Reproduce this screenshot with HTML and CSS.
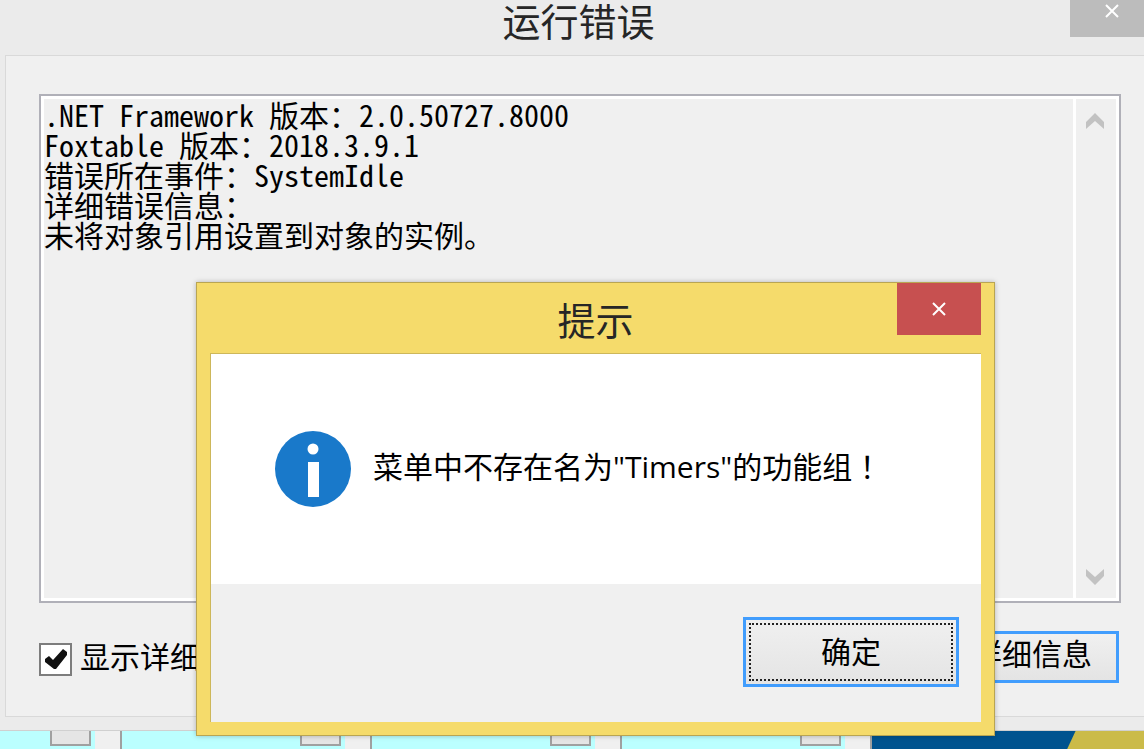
FILE: index.html
```html
<!DOCTYPE html>
<html lang="zh-CN">
<head>
  <meta charset="UTF-8" />
  <meta name="viewport" content="width=device-width, initial-scale=1.0"/>
  <title>运行错误</title>
  <link rel="stylesheet" href="styles.css">
</head>
<body>
  <main class="window">
    <header class="titlebar">
      <h1>运行错误</h1>
      <button class="close" aria-label="关闭">
        <svg width="16" height="14" viewBox="0 0 16 14"><path d="M2 1 L14 13 M14 1 L2 13"/></svg>
      </button>
    </header>
    <div class="panel">
      <div class="log">
        <textarea aria-label="错误信息" readonly>.NET Framework 版本：2.0.50727.8000
Foxtable 版本：2018.3.9.1
错误所在事件：SystemIdle
详细错误信息：
未将对象引用设置到对象的实例。</textarea>
        <div class="scrollbar">
          <svg width="20" height="18" viewBox="0 0 20 18"><path d="M1 10 L10 1 L19 10 V17 L10 9 L1 17 Z"/></svg>
          <svg width="20" height="18" viewBox="0 0 20 18"><path d="M1 1 L10 9 L19 1 V8 L10 17 L1 8 Z"/></svg>
        </div>
      </div>
      <div class="actions">
        <div class="check">
          <input type="checkbox" id="detail" checked>
          <svg width="33" height="33" viewBox="0 0 33 33"><path d="M6 16 L10 13 L14 17 L24 6 L28 9 V12 L17 26 H15 L6 19 Z"/></svg>
          <label for="detail">显示详细</label>
        </div>
        <button class="btn">详细信息</button>
      </div>
    </div>
  </main>

  <!-- form left open behind the error window -->
  <div class="behind">
    <div class="cells">
      <div class="cell"><i></i></div>
      <div class="cell"><i></i></div>
      <div class="cell"><i></i></div>
      <div class="cell"><i></i></div>
    </div>
    <div class="banner"></div>
  </div>

  <section class="dialog" role="dialog" aria-labelledby="dialog-title">
    <header class="dialog-title">
      <h2 id="dialog-title">提示</h2>
      <button class="close" aria-label="关闭">
        <svg width="16" height="14" viewBox="0 0 16 14"><path d="M2 1 L14 13 M14 1 L2 13"/></svg>
      </button>
    </header>
    <div class="client">
      <div class="message">
        <svg width="76" height="76" viewBox="0 0 76 76">
          <circle cx="38" cy="38" r="38" fill="#1979ca"/>
          <circle cx="38" cy="18" r="5.5" fill="#fff"/>
          <rect x="33" y="31" width="11" height="35" fill="#fff"/>
        </svg>
        <p>菜单中不存在名为"Timers"的功能组<span class="mark" lang="zh-TW">！</span></p>
      </div>
      <div class="dialog-actions">
        <button class="btn ok">确定</button>
      </div>
    </div>
  </section>
</body>
</html>
```

FILE: styles.css
```css
* {
  box-sizing: border-box;
}

body {
  margin: 0;
  height: 100vh;
  display: flex;
  flex-direction: column;
  overflow: hidden;
  position: relative;
  background-color: #ebebeb;
  color: #000;
  font-family: "Open Sans", "Noto Sans CJK SC", sans-serif;
  font-size: 30px;
}

h1,
h2 {
  margin: 0;
  font-size: 38px;
  font-weight: 400;
  line-height: 42px;
  color: #262626;
}

button {
  font-family: inherit;
  color: inherit;
}

svg {
  display: block;
  flex: none;
}

.window {
  flex: 1;
  display: flex;
  flex-direction: column;
  padding: 0 0 13px 5px;
  border-bottom: 1px solid #d0d0d0;
}

.titlebar {
  height: 55px;
  padding-left: 8px;
  position: relative;
  text-align: center;
}

.close {
  position: absolute;
  top: 0;
  right: 0;
  width: 74px;
  height: 37px;
  padding: 0;
  border: none;
  background-color: #bcbcbc;
}

.close svg {
  margin: 0 auto;
  fill: none;
  stroke: #fff;
  stroke-width: 2;
}

.titlebar .close {
  display: flex;
  padding: 4px 0 0 10px;
}

.panel {
  flex: 1;
  display: flex;
  flex-direction: column;
  padding: 38px 23px 33px 33px;
  background-color: #f0f0f0;
  border: 1px solid #d9d9d9;
  border-right: none;
}

.log {
  flex: 1;
  display: flex;
  padding: 3px;
  background-color: #fff;
  border: 2px solid #b0b0b8;
}

.log textarea {
  flex: 1;
  margin: 0;
  padding: 0;
  border: none;
  outline: none;
  resize: none;
  overflow: hidden;
  background-color: #f0f0f0;
  color: #000;
  font-family: "Noto Sans Mono CJK SC", "Noto Sans CJK SC", monospace;
  font-size: 30px;
  line-height: 30px;
}

.scrollbar {
  width: 40px;
  margin-left: 3px;
  padding: 13px 2px 12px 0;
  display: flex;
  flex-direction: column;
  justify-content: space-between;
  align-items: center;
  background-color: #f0f0f0;
  fill: #c2c2c2;
}

.actions {
  display: flex;
  justify-content: space-between;
  padding: 28px 2px 0 0;
}

.check {
  display: flex;
  align-items: center;
  gap: 8px;
  line-height: 52px;
  position: relative;
}

.check input {
  appearance: none;
  width: 33px;
  height: 33px;
  margin: 5px 0 0;
  border: 2px solid #7d7d7d;
  background-color: #fff;
}

.check svg {
  position: absolute;
  left: 0;
  top: 12px;
  fill: #111;
  visibility: hidden;
  pointer-events: none;
}

.check input:checked + svg {
  visibility: visible;
}

.btn {
  width: 174px;
  height: 52px;
  padding: 0 0 6px;
  border: 3px solid #419dfd;
  background: linear-gradient(#f0f0f0, #e4e4e4);
  font-size: 30px;
  line-height: 40px;
}

.behind {
  height: 18px;
  display: flex;
  background-color: #f0f0f0;
}

.cells {
  flex: 0 0 872px;
  display: flex;
  justify-content: flex-end;
  overflow: hidden;
}

.cell {
  flex: 0 0 250px;
  display: flex;
  justify-content: flex-end;
  background: linear-gradient(to right, #bff 223px, #f0f0f0 223px);
  border-right: 2px solid #a0a0a0;
  padding-right: 29px;
}

.cell i {
  width: 41px;
  height: 15px;
  background-color: #e5e5e5;
  border: 2px solid #a0a0a0;
  border-top: none;
}

.banner {
  flex: 1;
  background: linear-gradient(115deg, #00538f 184px, #cbbb49 185px);
}

.dialog {
  position: absolute;
  left: 196px;
  top: 282px;
  width: 799px;
  padding: 0 13px 13px;
  background-color: #f5db6b;
  border: 1px solid #b9a552;
  box-shadow: 0 0 5px rgba(0, 0, 0, 0.25);
}

.dialog-title {
  position: relative;
  height: 70px;
  padding-top: 16px;
  text-align: center;
}

.dialog-title .close {
  width: 84px;
  height: 52px;
  background-color: #c75050;
}

.client {
  background-color: #f0f0f0;
  border: solid #cdb75a;
  border-width: 1px 0 0 1px;
}

.message {
  height: 230px;
  display: flex;
  align-items: center;
  gap: 22px;
  padding-left: 64px;
  background-color: #fff;
}

.message p {
  margin: 0 0 6px;
  line-height: 40px;
}

.mark {
  font-family: "Noto Sans CJK TC", sans-serif;
}

.dialog-actions {
  display: flex;
  justify-content: flex-end;
  padding: 33px 22px 35px;
}

.ok {
  width: 216px;
  height: 70px;
  padding: 0;
  outline: 2px dotted #222;
  outline-offset: -8px;
}
```
